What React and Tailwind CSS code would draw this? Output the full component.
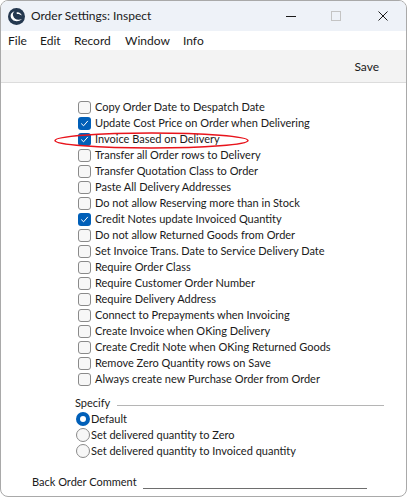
import React from "react";

const options = [
  ["Copy Order Date to Despatch Date", false],
  ["Update Cost Price on Order when Delivering", true],
  ["Invoice Based on Delivery", true],
  ["Transfer all Order rows to Delivery", false],
  ["Transfer Quotation Class to Order", false],
  ["Paste All Delivery Addresses", false],
  ["Do not allow Reserving more than in Stock", false],
  ["Credit Notes update Invoiced Quantity", true],
  ["Do not allow Returned Goods from Order", false],
  ["Set Invoice Trans. Date to Service Delivery Date", false],
  ["Require Order Class", false],
  ["Require Customer Order Number", false],
  ["Require Delivery Address", false],
  ["Connect to Prepayments when Invoicing", false],
  ["Create Invoice when OKing Delivery", false],
  ["Create Credit Note when OKing Returned Goods", false],
  ["Remove Zero Quantity rows on Save", false],
  ["Always create new Purchase Order from Order", false],
];

const radios = [
  ["Default", true],
  ["Set delivered quantity to Zero", false],
  ["Set delivered quantity to Invoiced quantity", false],
];

function CheckBox({ checked }) {
  if (checked) {
    return (
      <span className="flex h-[13px] w-[13px] shrink-0 items-center justify-center rounded-[3px] bg-[#005fb8]">
        <svg width="9" height="9" viewBox="0 0 9 9" fill="none">
          <path d="M1.5 4.8 L3.6 6.8 L7.6 2.2" stroke="#ffffff" strokeWidth="1" strokeLinecap="round" strokeLinejoin="round" />
        </svg>
      </span>
    );
  }
  return <span className="h-[13px] w-[13px] shrink-0 rounded-[3px] border border-[#8a8a8a] bg-[#f7f7f7]" />;
}

function Radio({ checked }) {
  if (checked) {
    return (
      <span className="flex h-[14px] w-[14px] shrink-0 items-center justify-center rounded-full bg-[#005fb8]">
        <span className="h-[6px] w-[6px] rounded-full bg-white" />
      </span>
    );
  }
  return <span className="h-[14px] w-[14px] shrink-0 rounded-full border border-[#8a8a8a] bg-[#f7f7f7]" />;
}

function Logo() {
  return (
    <svg width="17" height="17" viewBox="0 0 17 17">
      <circle cx="8.5" cy="8.5" r="8.5" fill="#24384f" />
      <path d="M2.6 8 C3.2 13 9.5 15.2 14 11 C10.6 12.6 6.2 12 5 7.6 C4.6 6 5.2 4.2 6.6 3.2 C4.2 3.8 2.6 5.6 2.6 8 Z" fill="#ffffff" />
      <path d="M8.6 4.4 C10.8 3.9 13.2 5.2 13.8 7.6 C12.5 6.4 10.7 5.7 8.8 6 Z" fill="#ffffff" />
    </svg>
  );
}

export default function App() {
  return (
    <div
      className="h-[497px] w-[408px] bg-white text-[12px] text-[#1a1a1a]"
      style={{ fontFamily: 'Lato, "Liberation Sans", Arial, sans-serif' }}
    >
      <div className="relative flex h-[497px] w-[407px] flex-col overflow-hidden rounded-[8px] border border-[#a9a9a9] bg-white">
        {/* title bar */}
        <div className="flex h-[30px] shrink-0 items-center bg-[#eef2f8] pl-[7px]">
          <Logo />
          <span className="ml-[6px] leading-none">Order Settings: Inspect</span>
          <div className="ml-auto flex items-center">
            <span className="mr-[35px] block h-px w-[10px] bg-[#1a1a1a]" />
            <span className="mr-[37px] block h-[10px] w-[10px] border border-[#c4c4c4]" />
            <svg width="10" height="10" viewBox="0 0 10 10" className="mr-[18px]">
              <path d="M0.5 0.5 L9.5 9.5 M9.5 0.5 L0.5 9.5" stroke="#1a1a1a" strokeWidth="1" />
            </svg>
          </div>
        </div>

        {/* menu bar */}
        <div className="flex h-[19px] shrink-0 items-center bg-white pl-[7px]">
          <span className="w-[32px]">File</span>
          <span className="w-[34px]">Edit</span>
          <span className="w-[51px]">Record</span>
          <span className="w-[58px]">Window</span>
          <span>Info</span>
        </div>

        {/* toolbar */}
        <div className="flex h-[33px] shrink-0 items-center justify-end border-b border-[#dcdcdc] bg-[#f3f3f3] pr-[27px]">
          <span className="mt-[2px]">Save</span>
        </div>

        {/* settings */}
        <div className="flex flex-col pt-[16px] text-[11px]">
          <div className="flex flex-col pl-[77px]">
            {options.map(([label, checked]) => (
              <div key={label} className="flex h-4 items-center gap-[4px] whitespace-nowrap">
                <CheckBox checked={checked} />
                <span>{label}</span>
              </div>
            ))}
          </div>

          <div className="mt-[8px] flex h-4 items-center pl-[74px] pr-[22px]">
            <span>Specify</span>
            <span className="ml-[7px] mt-[4px] h-px flex-1 bg-[#b5b5b5]" />
          </div>
          <div className="flex flex-col pl-[75px]">
            {radios.map(([label, checked]) => (
              <div key={label} className="flex h-4 items-center gap-[1px] whitespace-nowrap">
                <Radio checked={checked} />
                <span>{label}</span>
              </div>
            ))}
          </div>

          <div className="mt-[15px] flex h-4 items-center whitespace-nowrap pl-[31px]">
            <span className="w-[111px]">Back Order Comment</span>
            <span className="mt-[12px] h-px w-[224px] bg-[#6e6e6e]" />
          </div>
        </div>

        {/* red annotation ring */}
        <svg className="pointer-events-none absolute left-0 top-0" width="407" height="497">
          <ellipse cx="150.5" cy="139.5" rx="96.5" ry="7.5" fill="none" stroke="#e8141c" strokeWidth="1.5" />
        </svg>
      </div>
    </div>
  );
}
